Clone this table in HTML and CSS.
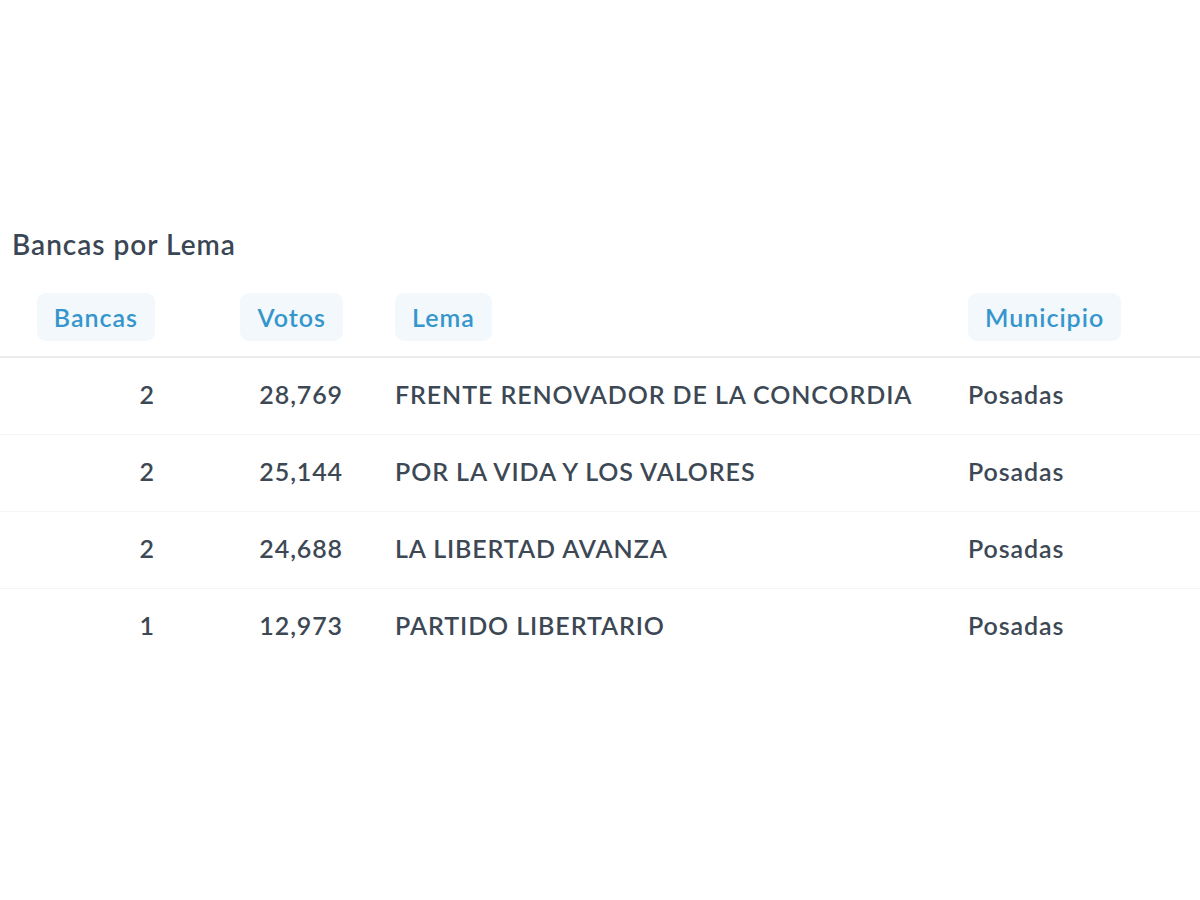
FILE: index.html
```html
<!DOCTYPE html>
<html lang="es">
<head>
<meta charset="utf-8">
<title>Bancas por Lema</title>
<link rel="stylesheet" href="styles.css">
</head>
<body>
<main class="page">
  <h2 class="title">Bancas por Lema</h2>
  <table class="tbl">
    <colgroup>
      <col class="c-bancas">
      <col class="c-votos">
      <col class="c-lema">
      <col class="c-muni">
    </colgroup>
    <thead>
      <tr>
        <th class="num"><span class="pill">Bancas</span></th>
        <th class="num"><span class="pill">Votos</span></th>
        <th class="txt lema"><span class="pill">Lema</span></th>
        <th class="txt"><span class="pill">Municipio</span></th>
      </tr>
    </thead>
    <tbody>
      <tr><td class="num">2</td><td class="num">28,769</td><td class="txt lema">FRENTE RENOVADOR DE LA CONCORDIA</td><td class="txt">Posadas</td></tr>
      <tr><td class="num">2</td><td class="num">25,144</td><td class="txt lema">POR LA VIDA Y LOS VALORES</td><td class="txt">Posadas</td></tr>
      <tr><td class="num">2</td><td class="num">24,688</td><td class="txt lema">LA LIBERTAD AVANZA</td><td class="txt">Posadas</td></tr>
      <tr><td class="num">1</td><td class="num">12,973</td><td class="txt lema">PARTIDO LIBERTARIO</td><td class="txt">Posadas</td></tr>
    </tbody>
  </table>
</main>
</body>
</html>
```
FILE: styles.css
```css
html, body {
  margin: 0;
  padding: 0;
  background: #ffffff;
}
body {
  font-family: Lato, "Open Sans", sans-serif;
  color: #3d4855;
}
.page {
  padding-top: 229px;
}
.title {
  margin: 0 0 0 12px;
  font-size: 28px;
  line-height: 30px;
  font-weight: 600;
  color: #3a4654;
  letter-spacing: 1px;
}
.tbl {
  margin-top: 34px;
  width: 1200px;
  border-collapse: collapse;
  table-layout: fixed;
}
.c-bancas { width: 171px; }
.c-votos { width: 208px; }
.c-lema { width: 573px; }
.c-muni { width: 248px; }
.tbl th {
  padding: 0 16px 15px;
  border-bottom: 2px solid #ececec;
  font-weight: 600;
}
.tbl th.num { text-align: right; }
.tbl th.txt { text-align: left; }
.tbl th:nth-child(2) { padding-right: 36px; }
.pill {
  display: inline-block;
  height: 48px;
  line-height: 48px;
  padding: 0 17px;
  border-radius: 9px;
  background: #f2f8fc;
  color: #3596cc;
  font-size: 25px;
  font-weight: 600;
  letter-spacing: 1px;
}
.tbl td {
  height: 71px;
  padding: 0 16px 5px;
  border-bottom: 1px solid #f4f4f4;
  font-size: 25px;
  font-weight: 600;
  letter-spacing: 0.9px;
  color: #3d4855;
  vertical-align: middle;
  white-space: nowrap;
}
.tbl td.num { text-align: right; }
.tbl td:nth-child(2) { padding-right: 36px; }
.tbl td.txt { text-align: left; }
.tbl tbody tr:last-child td { border-bottom: none; }
```
